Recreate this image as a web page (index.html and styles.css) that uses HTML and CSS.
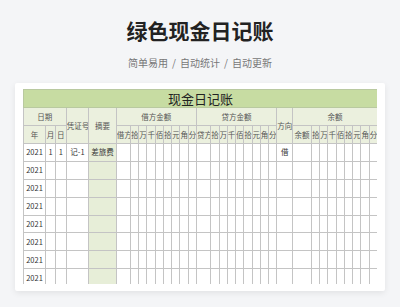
FILE: index.html
```html
<!DOCTYPE html>
<html lang="zh">
<head>
<meta charset="utf-8">
<title>绿色现金日记账</title>
<link rel="stylesheet" href="styles.css">
</head>
<body>
<header class="hero">
  <h1 class="title">绿色现金日记账</h1>
  <p class="sub"><span>简单易用</span><span class="sep">/</span><span>自动统计</span><span class="sep">/</span><span>自动更新</span></p>
</header>
<main class="card">
  <div class="clip">
    <table class="book">
      <colgroup>
        <col class="c-y"><col class="c-m"><col class="c-d"><col class="c-pz"><col class="c-zy">
        <col class="c-lab"><col class="c-n"><col class="c-n"><col class="c-n"><col class="c-n"><col class="c-n"><col class="c-n"><col class="c-n"><col class="c-n">
        <col class="c-lab"><col class="c-n"><col class="c-n"><col class="c-n"><col class="c-n"><col class="c-n"><col class="c-n"><col class="c-n"><col class="c-n">
        <col class="c-fx">
        <col class="c-ye"><col class="c-n"><col class="c-n"><col class="c-n"><col class="c-n"><col class="c-n"><col class="c-n"><col class="c-n"><col class="c-n">
      </colgroup>
      <thead>
        <tr class="t"><th colspan="33">现金日记账</th></tr>
        <tr class="h">
          <th colspan="3">日期</th>
          <th rowspan="2">凭证号</th>
          <th rowspan="2">摘要</th>
          <th colspan="9">借方金额</th>
          <th colspan="9">贷方金额</th>
          <th rowspan="2">方向</th>
          <th colspan="9">余额</th>
        </tr>
        <tr class="h">
          <th>年</th><th>月</th><th>日</th>
          <th>借方</th><th>拾</th><th>万</th><th>千</th><th>佰</th><th>拾</th><th>元</th><th>角</th><th>分</th>
          <th>贷方</th><th>拾</th><th>万</th><th>千</th><th>佰</th><th>拾</th><th>元</th><th>角</th><th>分</th>
          <th>余额</th><th>拾</th><th>万</th><th>千</th><th>佰</th><th>拾</th><th>元</th><th>角</th><th>分</th>
        </tr>
      </thead>
      <tbody>
        <tr class="d"><td>2021</td><td>1</td><td>1</td><td>记-1</td><td class="zy">差旅费</td><td></td><td></td><td></td><td></td><td></td><td></td><td></td><td></td><td></td><td></td><td></td><td></td><td></td><td></td><td></td><td></td><td></td><td></td><td>借</td><td></td><td></td><td></td><td></td><td></td><td></td><td></td><td></td><td></td></tr>
        <tr class="d"><td>2021</td><td></td><td></td><td></td><td class="zy"></td><td></td><td></td><td></td><td></td><td></td><td></td><td></td><td></td><td></td><td></td><td></td><td></td><td></td><td></td><td></td><td></td><td></td><td></td><td></td><td></td><td></td><td></td><td></td><td></td><td></td><td></td><td></td><td></td></tr>
        <tr class="d"><td>2021</td><td></td><td></td><td></td><td class="zy"></td><td></td><td></td><td></td><td></td><td></td><td></td><td></td><td></td><td></td><td></td><td></td><td></td><td></td><td></td><td></td><td></td><td></td><td></td><td></td><td></td><td></td><td></td><td></td><td></td><td></td><td></td><td></td><td></td></tr>
        <tr class="d"><td>2021</td><td></td><td></td><td></td><td class="zy"></td><td></td><td></td><td></td><td></td><td></td><td></td><td></td><td></td><td></td><td></td><td></td><td></td><td></td><td></td><td></td><td></td><td></td><td></td><td></td><td></td><td></td><td></td><td></td><td></td><td></td><td></td><td></td><td></td></tr>
        <tr class="d"><td>2021</td><td></td><td></td><td></td><td class="zy"></td><td></td><td></td><td></td><td></td><td></td><td></td><td></td><td></td><td></td><td></td><td></td><td></td><td></td><td></td><td></td><td></td><td></td><td></td><td></td><td></td><td></td><td></td><td></td><td></td><td></td><td></td><td></td><td></td></tr>
        <tr class="d"><td>2021</td><td></td><td></td><td></td><td class="zy"></td><td></td><td></td><td></td><td></td><td></td><td></td><td></td><td></td><td></td><td></td><td></td><td></td><td></td><td></td><td></td><td></td><td></td><td></td><td></td><td></td><td></td><td></td><td></td><td></td><td></td><td></td><td></td><td></td></tr>
        <tr class="d"><td>2021</td><td></td><td></td><td></td><td class="zy"></td><td></td><td></td><td></td><td></td><td></td><td></td><td></td><td></td><td></td><td></td><td></td><td></td><td></td><td></td><td></td><td></td><td></td><td></td><td></td><td></td><td></td><td></td><td></td><td></td><td></td><td></td><td></td><td></td></tr>
        <tr class="d"><td>2021</td><td></td><td></td><td></td><td class="zy"></td><td></td><td></td><td></td><td></td><td></td><td></td><td></td><td></td><td></td><td></td><td></td><td></td><td></td><td></td><td></td><td></td><td></td><td></td><td></td><td></td><td></td><td></td><td></td><td></td><td></td><td></td><td></td><td></td></tr>
      </tbody>
    </table>
  </div>
</main>
</body>
</html>
```

FILE: styles.css
```css
html, body {
  margin: 0;
  padding: 0;
}
body {
  background: #f4f5f7;
  font-family: "Noto Sans CJK SC", "Noto Sans", sans-serif;
  color: #222;
  width: 400px;
  height: 307px;
  overflow: hidden;
}
.hero {
  padding-top: 16px;
  text-align: center;
}
.title {
  margin: 0;
  font-size: 21px;
  line-height: 28px;
  font-weight: 700;
  color: #222;
}
.sub {
  margin: 12px 0 0;
  font-size: 10px;
  line-height: 14px;
  color: #777;
}
.sep {
  margin: 0 4px;
}
.card {
  display: block;
  margin: 13px 15px 0;
  padding: 6px 8px 7px;
  background: #fff;
  border-radius: 2px;
  box-shadow: 0 2px 6px rgba(0, 0, 0, 0.08);
}
.clip {
  height: 195px;
  overflow: hidden;
}
.book {
  width: 354px;
  table-layout: fixed;
  border-collapse: collapse;
  font-size: 7.5px;
  color: #333;
}
.book th, .book td {
  border: 1px solid #c4c4c4;
  padding: 0;
  text-align: center;
  white-space: nowrap;
  overflow: hidden;
  font-weight: 400;
  line-height: 10px;
}
.c-y { width: 22px; }
.c-m { width: 10px; }
.c-d { width: 10.7px; }
.c-pz { width: 22.6px; }
.c-zy { width: 27.4px; }
.c-lab { width: 14.3px; }
.c-n { width: 8.25px; }
.c-fx { width: 16px; }
.c-ye { width: 18.7px; }
.t th {
  height: 17px;
  background: #c7dca2;
  font-size: 13px;
  line-height: 17px;
  color: #222;
  border-color: #b9c9a0;
}
.h th {
  height: 17px;
  background: #ebf0de;
  color: #555;
}
.d td {
  height: 16.9px;
}
.d td.zy {
  background: #e7eed8;
}
```
